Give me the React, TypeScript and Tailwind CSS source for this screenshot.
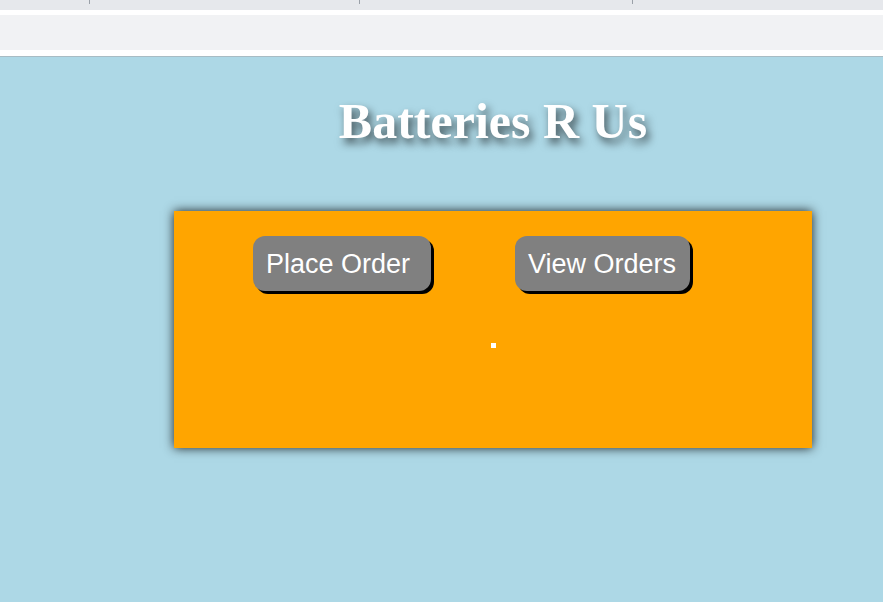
import React from "react";

export default function App() {
    return (
        <div className="min-h-[602px] flex flex-col bg-[#add8e6]">
            {/* Browser strip */}
            <div className="h-[10px] bg-[#e6e8ec] relative">
                <span className="absolute left-[89px] top-0 h-[4px] w-px bg-[#9aa0a8]" />
                <span className="absolute left-[359px] top-0 h-[4px] w-px bg-[#9aa0a8]" />
                <span className="absolute left-[632px] top-0 h-[4px] w-px bg-[#9aa0a8]" />
            </div>
            <div className="bg-white pt-[5px] pb-[6px]">
                <div className="h-[35px] bg-[#f1f2f4]" />
            </div>
            <div className="h-px bg-[#a8bcc4]" />

            {/* Header */}
            <h1 className="mt-[39px] ml-[174px] w-[638px] text-center text-[50px] leading-none font-bold text-white font-['Liberation_Serif',serif] [text-shadow:_3px_5px_9px_rgba(0,0,0,0.65)]">
                Batteries R Us
            </h1>

            {/* Menu card */}
            <div className="mt-[65px] ml-[174px] w-[638px] h-[237px] bg-[#ffa500] shadow-[0_0_10px_rgba(0,0,0,0.85)] pt-[25px] flex flex-col">
                <div className="flex flex-row pl-[79px] gap-[84px]">
                    <button className="w-[178px] h-[55px] pl-[13px] pt-[2px] text-left bg-[#808080] text-white text-[27px] rounded-[12px] shadow-[3px_3px_0_#000] font-['Liberation_Sans',sans-serif]">
                        Place Order
                    </button>
                    <button className="w-[175px] h-[55px] pl-[13px] pt-[2px] text-left bg-[#808080] text-white text-[27px] rounded-[12px] shadow-[3px_3px_0_#000] font-['Liberation_Sans',sans-serif]">
                        View Orders
                    </button>
                </div>
                <div className="mt-[52px] ml-[317px] w-[5px] h-[5px] shrink-0 bg-white" />
            </div>
        </div>
    );
}
